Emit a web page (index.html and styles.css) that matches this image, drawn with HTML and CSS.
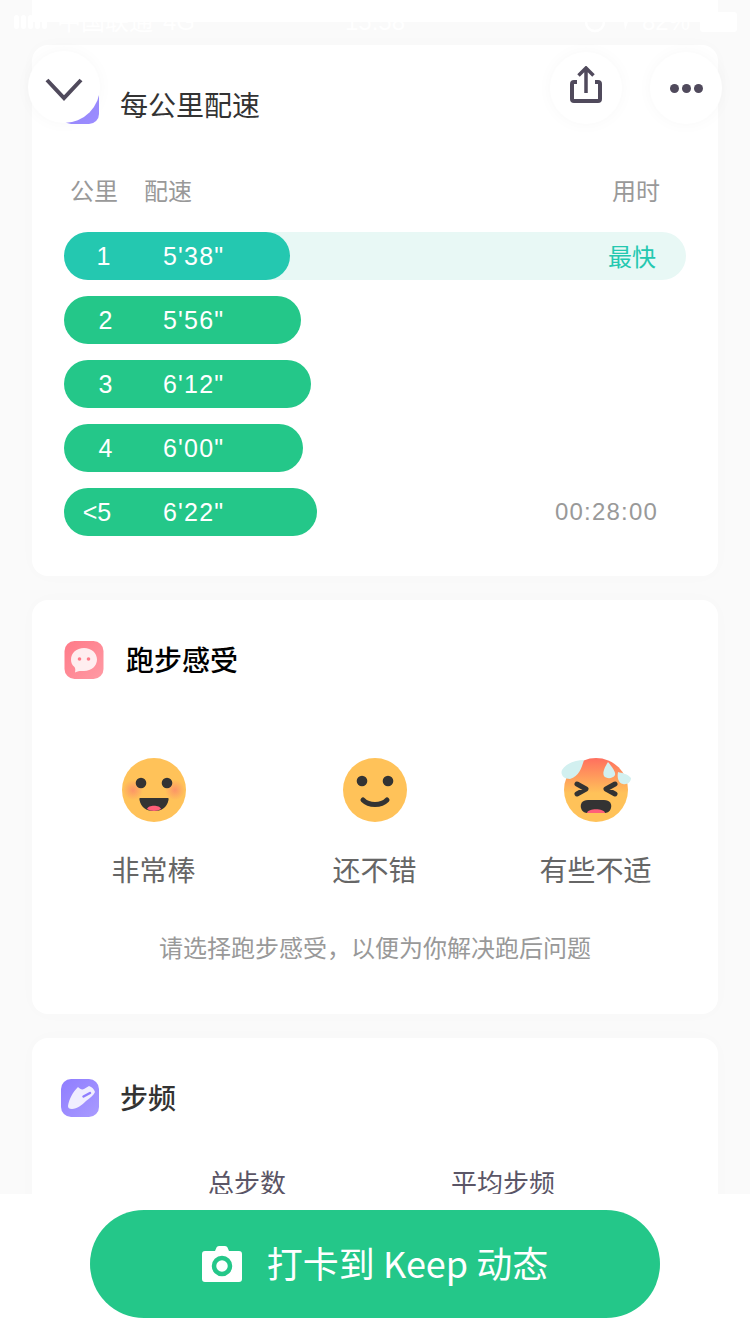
FILE: index.html
```html
<!DOCTYPE html>
<html lang="zh-CN">
<head>
  <meta charset="UTF-8" />
  <meta name="viewport" content="width=device-width, initial-scale=1.0"/>
  <title>跑步详情</title>
  <link rel="stylesheet" href="styles.css">
</head>
<body>

  <div class="status-bar">
    <div class="status-left">
      <span class="signal"><i></i><i></i><i></i><i></i><i></i></span>
      <span>中国联通</span>
      <span>4G</span>
    </div>
    <span class="status-time">15:58</span>
    <div class="status-right">
      <svg width="22" height="22" viewBox="0 0 22 22"><circle cx="11" cy="11" r="9" fill="none" stroke="#fff" stroke-width="2.500"/></svg>
      <svg width="16" height="18" viewBox="0 0 16 18"><path d="M1 7 L15 1 L9 17 L8 9 Z" fill="#fff"/></svg>
      <span>82%</span>
      <span class="battery"></span>
    </div>
  </div>

  <div class="float-btn btn-back">
    <svg width="40" height="24" viewBox="0 0 40 24"><path d="M3 3 L20 21 L37 3" fill="none" stroke="#504a5c" stroke-width="4"/></svg>
  </div>
  <div class="float-btn btn-share">
    <svg width="32" height="37" viewBox="0 0 32 37">
      <path d="M7 16 H4 Q2 16 2 18 V33 Q2 35 4 35 H28 Q30 35 30 33 V18 Q30 16 28 16 H25" fill="none" stroke="#504a5c" stroke-width="4"/>
      <path d="M16 27 V3 M8.500 9.500 L16 2 L23.500 9.500" fill="none" stroke="#504a5c" stroke-width="3.500"/>
    </svg>
  </div>
  <div class="float-btn btn-more">
    <span></span><span></span><span></span>
  </div>

  <div class="page">
    <div class="prev-card"></div>

    <section class="card card-pace">
      <div class="card-title title-pace">
        <svg class="title-icon" width="40" height="40" viewBox="0 0 40 40"><rect x="1" y="1" width="38" height="38" rx="10" fill="#9b8cff"/></svg>
        <h3>每公里配速</h3>
      </div>

      <div class="pace-head">
        <span class="col-km">公里</span>
        <span class="col-pace">配速</span>
        <span class="col-time">用时</span>
      </div>

      <div class="pace-list">
        <div class="pace-row fastest">
          <div class="pace-bar bar-1"><span class="km">1</span><span class="pace">5'38"</span></div>
          <span class="pace-note">最快</span>
        </div>
        <div class="pace-row">
          <div class="pace-bar bar-2"><span class="km">2</span><span class="pace">5'56"</span></div>
        </div>
        <div class="pace-row">
          <div class="pace-bar bar-3"><span class="km">3</span><span class="pace">6'12"</span></div>
        </div>
        <div class="pace-row">
          <div class="pace-bar bar-4"><span class="km">4</span><span class="pace">6'00"</span></div>
        </div>
        <div class="pace-row">
          <div class="pace-bar bar-5"><span class="km">&lt;5</span><span class="pace">6'22"</span></div>
          <span class="pace-total">00:28:00</span>
        </div>
      </div>
    </section>

    <section class="card card-feel">
      <div class="card-title title-feel">
        <svg class="title-icon" width="40" height="40" viewBox="0 0 40 40">
          <defs>
            <linearGradient id="pinkBg" x1="0" y1="0" x2="1" y2="1"><stop offset="0" stop-color="#ff7a88"/><stop offset="1" stop-color="#ff9aa4"/></linearGradient>
          </defs>
          <rect x="0.500" y="1" width="39" height="38" rx="10" fill="url(#pinkBg)"/>
          <path d="M20 8 C27.500 8 33 13 33 19.500 C33 26 27.500 31 20 31 C17 31 15 30.500 11 32.500 C11.500 30 11.500 28.500 10.500 27 C8 25 7 22.500 7 19.500 C7 13 12.500 8 20 8 Z" fill="#fff" fill-opacity="0.85"/>
          <circle cx="15.500" cy="19" r="1.800" fill="#ff7a88"/>
          <circle cx="24.500" cy="19" r="1.800" fill="#ff7a88"/>
        </svg>
        <h3>跑步感受</h3>
      </div>

      <div class="feel-list">
        <div class="feel-item">
          <svg width="64" height="64" viewBox="0 0 64 64">
            <defs>
              <radialGradient id="blush"><stop offset="0" stop-color="#fb8a6a" stop-opacity="0.8"/><stop offset="1" stop-color="#fb8a6a" stop-opacity="0"/></radialGradient>
            </defs>
            <circle cx="32" cy="32" r="32" fill="#ffc259"/>
            <circle cx="11" cy="32" r="10" fill="url(#blush)"/>
            <circle cx="53" cy="32" r="10" fill="url(#blush)"/>
            <circle cx="19" cy="25" r="5.300" fill="#333"/>
            <circle cx="45" cy="25" r="5.300" fill="#333"/>
            <path d="M18 40 H46 Q47 40 46.500 42 C45 50 39 53 32 53 C25 53 19 50 17.500 42 Q17 40 18 40 Z" fill="#333"/>
            <path d="M25 51 C26 46.500 38 46.500 39 51 C35 53.500 29 53.500 25 51 Z" fill="#ff5f79"/>
          </svg>
          <span>非常棒</span>
        </div>
        <div class="feel-item">
          <svg width="64" height="64" viewBox="0 0 64 64">
            <circle cx="32" cy="32" r="32" fill="#ffc259"/>
            <circle cx="19" cy="23" r="5.300" fill="#333"/>
            <circle cx="45" cy="23" r="5.300" fill="#333"/>
            <path d="M20 42 C26 48 38 48 44 42" fill="none" stroke="#333" stroke-width="5" stroke-linecap="round"/>
          </svg>
          <span>还不错</span>
        </div>
        <div class="feel-item">
          <svg width="72" height="64" viewBox="0 0 72 64">
            <defs>
              <linearGradient id="hot" x1="0" y1="0" x2="0" y2="1"><stop offset="0" stop-color="#ff6f5f"/><stop offset="0.55" stop-color="#ffc259"/></linearGradient>
            </defs>
            <circle cx="36" cy="32" r="32" fill="url(#hot)"/>
            <path d="M17 26 L26 31 L17 36 M55 26 L46 31 L55 36" fill="none" stroke="#333" stroke-width="5" stroke-linecap="round" stroke-linejoin="round"/>
            <path d="M28 42 H44 C50 42 52 46 51 50 C50 54 47 55 44 55 H28 C25 55 22 54 21 50 C20 46 22 42 28 42 Z" fill="#333"/>
            <path d="M27 55 C28 50 44 50 45 55 Z" fill="#ff5f79"/>
            <path d="M2 12 C6 5 16 2 24 2 C22 8 20 18 10 21 C4 21 0 17 2 12 Z" fill="#d2f0f0"/>
            <path d="M48 4 C52 9 56 14 55 17 C53 21 46 21 44 18 C42 14 45 9 48 4 Z" fill="#d2f0f0"/>
            <path d="M58 14 C62 15 68 16 71 20 C71 24 67 27 63 26 C58 25 57 19 58 14 Z" fill="#d2f0f0"/>
          </svg>
          <span>有些不适</span>
        </div>
      </div>

      <p class="feel-hint">请选择跑步感受，以便为你解决跑后问题</p>
    </section>

    <section class="card card-cadence">
      <div class="card-title title-cadence">
        <svg class="title-icon" width="40" height="40" viewBox="0 0 40 40">
          <defs>
            <linearGradient id="purpleBg" x1="0" y1="0" x2="1" y2="1"><stop offset="0" stop-color="#8f7dff"/><stop offset="1" stop-color="#a99bff"/></linearGradient>
          </defs>
          <rect x="1" y="1" width="38" height="38" rx="10" fill="url(#purpleBg)"/>
          <path d="M8 28 C9 21 13 14 18 9 C20 11 22 12 24 11 L29 8 C32 9 34 11 35 14 C34 17 30 20 26 23 C22 27 17 31 12 31 C9 31 8 30 8 28 Z" fill="#fff" fill-opacity="0.85"/>
          <path d="M23.500 18.500 L30 15" stroke="#8f7dff" stroke-width="2.500" stroke-linecap="round"/>
        </svg>
        <h3>步频</h3>
      </div>
      <div class="cadence-cols">
        <span>总步数</span>
        <span>平均步频</span>
      </div>
    </section>
  </div>

  <div class="bottom-bar">
    <button class="checkin-btn">
      <svg width="40" height="36" viewBox="0 0 40 36">
        <path d="M13 5 L14.500 1.500 Q15 0 17 0 H23 Q25 0 25.500 1.500 L27 5 H37 Q40 5 40 8 V33 Q40 36 37 36 H3 Q0 36 0 33 V8 Q0 5 3 5 Z" fill="#fff"/>
        <circle cx="20" cy="20" r="8" fill="#fff" stroke="#24c789" stroke-width="4.500"/>
      </svg>
      <span>打卡到 Keep 动态</span>
    </button>
  </div>

</body>
</html>
```

FILE: styles.css
```css
* {
  box-sizing: border-box;
}

html, body {
  margin: 0;
  height: 1334px;
  overflow: hidden;
}

body {
  position: relative;
  font-family: "Liberation Sans", "Noto Sans CJK SC", sans-serif;
  background-color: #fafafa;
  color: #333;
}

.page {
  padding: 0 32px;
}

/* Status bar, white on the pale page */
.status-bar {
  position: absolute;
  top: 8px;
  left: 14px;
  right: 13px;
  display: flex;
  align-items: center;
  color: #fff;
  font-size: 24px;
  line-height: 28px;
}

.status-left, .status-right {
  display: flex;
  align-items: center;
  gap: 10px;
}

.status-left {
  width: 331px;
}

.status-right {
  margin-left: auto;
}

.signal {
  display: flex;
  gap: 2px;
}

.signal i {
  width: 5px;
  height: 14px;
  border-radius: 3px;
  background: #fff;
}

.battery {
  width: 37px;
  height: 20px;
  border-radius: 3px;
  background: #fff;
}

/* Floating round buttons */
.float-btn {
  position: absolute;
  width: 72px;
  height: 72px;
  border-radius: 50%;
  background: #fff;
  box-shadow: 0 0 16px rgba(0, 0, 0, 0.03);
  display: flex;
  align-items: center;
  justify-content: center;
  z-index: 2;
}

.btn-back {
  top: 51px;
  left: 28px;
}

.btn-back svg {
  margin-top: 4px;
}

.btn-share {
  top: 52px;
  left: 550px;
}

.btn-share svg {
  margin-bottom: 7px;
}

.btn-more {
  top: 52px;
  left: 650px;
  gap: 3px;
}

.btn-more span {
  width: 9px;
  height: 9px;
  border-radius: 50%;
  background: #504a5c;
}

/* Cards */
.prev-card {
  height: 22px;
  margin-bottom: 23px;
  background: #fff;
}

.card {
  background: #fff;
  border-radius: 16px;
  box-shadow: 0 0 20px rgba(0, 0, 0, 0.015);
  margin-bottom: 24px;
}

.card-title {
  display: flex;
  align-items: center;
}

.card-title h3 {
  margin: 0;
  height: 40px;
  padding-top: 4px;
  font-size: 28px;
  line-height: 36px;
  font-weight: 500;
}

.card-pace {
  height: 531px;
  padding-top: 40px;
}

.title-pace {
  padding-left: 28px;
  gap: 20px;
}

.title-pace h3 {
  font-weight: 400;
}

.pace-head {
  display: flex;
  margin-top: 50px;
  padding: 0 58px 0 38px;
  font-size: 24px;
  line-height: 34px;
  color: #999;
}

.col-pace {
  margin-left: 26px;
}

.col-time {
  margin-left: auto;
}

.pace-list {
  margin-top: 23px;
  padding: 0 32px;
  display: flex;
  flex-direction: column;
  gap: 16px;
}

.pace-row {
  height: 48px;
  border-radius: 24px;
  display: flex;
  align-items: center;
  justify-content: space-between;
}

.pace-row.fastest {
  background: #e8f8f5;
}

.pace-bar {
  height: 48px;
  border-radius: 24px;
  background: #24c789;
  color: #fff;
  display: flex;
  align-items: center;
  font-size: 25px;
}

.fastest .pace-bar {
  background: #24c8b0;
}

.bar-1 { width: 226px; }
.bar-2 { width: 237px; }
.bar-3 { width: 247px; }
.bar-4 { width: 239px; }
.bar-5 { width: 253px; }

.km {
  width: 99px;
  padding-left: 13px;
  padding-right: 29px;
  text-align: center;
}

.bar-1 .km {
  padding-left: 10px;
  padding-right: 30px;
}

.bar-5 .km {
  padding-left: 0;
  padding-right: 33px;
}

.pace {
  letter-spacing: 1.200px;
}

.pace-note {
  margin-right: 30px;
  margin-bottom: 2px;
  font-size: 24px;
  color: #24c8b0;
}

.pace-total {
  margin-right: 28px;
  font-size: 24px;
  letter-spacing: 1.200px;
  color: #999;
}

.card-feel {
  height: 414px;
  padding-top: 40px;
}

.title-feel {
  padding-left: 32px;
  gap: 22px;
}

.title-feel h3 {
  color: #000;
}

.feel-list {
  display: grid;
  grid-template-columns: 221px 221px 221px;
  margin-top: 78px;
  padding-left: 11px;
}

.feel-item {
  display: flex;
  flex-direction: column;
  align-items: center;
  font-size: 28px;
  line-height: 40px;
  color: #666;
}

.feel-item span {
  margin-top: 30px;
}

.feel-hint {
  margin: 40px 0 0;
  text-align: center;
  font-size: 24px;
  line-height: 34px;
  color: #999;
}

.card-cadence {
  height: 296px;
  margin-bottom: 0;
  padding-top: 40px;
}

.title-cadence {
  padding-left: 28px;
  gap: 20px;
}

.cadence-cols {
  display: grid;
  grid-template-columns: 256px 256px;
  margin-top: 44px;
  padding-top: 2px;
  padding-left: 87px;
  font-size: 26px;
  line-height: 40px;
  text-align: center;
  color: #5a5566;
}

/* Bottom action */
.bottom-bar {
  position: absolute;
  left: 0;
  right: 0;
  bottom: 0;
  height: 140px;
  padding-top: 16px;
  background: #fff;
  display: flex;
  justify-content: center;
  align-items: flex-start;
}

.checkin-btn {
  width: 570px;
  height: 108px;
  padding: 0 0 4px;
  border: none;
  border-radius: 54px;
  background: #24c789;
  color: #fff;
  font-family: "Noto Sans CJK SC", sans-serif;
  font-size: 36px;
  font-weight: 400;
  display: flex;
  align-items: center;
  justify-content: center;
  gap: 25px;
}

.checkin-btn svg {
  margin-top: 4px;
}
```
